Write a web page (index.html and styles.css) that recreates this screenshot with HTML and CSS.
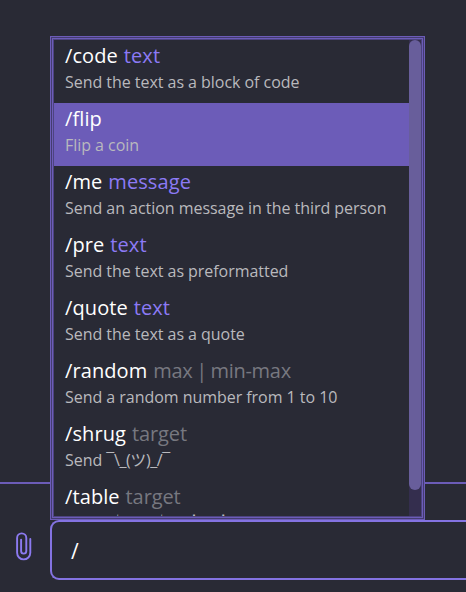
FILE: index.html
```
<!DOCTYPE html>
<html lang="en">
<head>
<meta charset="utf-8">
<title>Chat</title>
<link rel="stylesheet" href="styles.css">
</head>
<body>
<div class="chat">
	<div class="messages"></div>
	<div class="composer">
		<button class="attach" aria-label="Attach a file">
			<svg width="18" height="30" viewBox="0 0 18 30" fill="none" stroke="currentColor" stroke-width="1.9" stroke-linecap="round">
				<path d="M15.3 7v13.8a6.6 6.6 0 0 1-13.2 0V6a4.6 4.6 0 0 1 9.2 0v13a2.6 2.6 0 0 1-5.2 0V7.6"/>
			</svg>
		</button>
		<div class="input">/</div>
	</div>
	<div class="commands">
		<ul class="list">
			<li><div class="name">/code <span class="arg">text</span></div><div class="desc">Send the text as a block of code</div></li>
			<li class="selected"><div class="name">/flip</div><div class="desc">Flip a coin</div></li>
			<li><div class="name">/me <span class="arg">message</span></div><div class="desc">Send an action message in the third person</div></li>
			<li><div class="name">/pre <span class="arg">text</span></div><div class="desc">Send the text as preformatted</div></li>
			<li><div class="name">/quote <span class="arg">text</span></div><div class="desc">Send the text as a quote</div></li>
			<li><div class="name">/random <span class="optional range">max | min-max</span></div><div class="desc">Send a random number from 1 to 10</div></li>
			<li><div class="name">/shrug <span class="optional">target</span></div><div class="desc">Send <span class="shrug">¯\_(ツ)_/¯</span></div></li>
			<li><div class="name">/table <span class="optional">target</span></div><div class="desc">Send <span class="flipped">(╯°□°)╯︵ ┻━┻</span></div></li>
		</ul>
		<div class="scrollbar"><div class="thumb"></div></div>
	</div>
</div>
</body>
</html>
```

FILE: styles.css
```
* {
	box-sizing: border-box;
}
body {
	margin: 0;
	background: #292a35;
	color: #fff;
	font-family: "Open Sans", "Noto Sans", "Noto Sans CJK JP", sans-serif;
	overflow: hidden;
}
.chat {
	position: relative;
	display: flex;
	flex-direction: column;
	height: 592px;
}
.messages {
	flex: 1;
}
.composer {
	display: flex;
	height: 110px;
	padding: 36px 0 12px;
	border-top: 2px solid #6c5cb8;
}
.attach {
	width: 50px;
	padding: 0 0 6px 15px;
	border: 0;
	background: none;
	color: #8c7af0;
	display: flex;
	align-items: center;
}
.input {
	flex: 1;
	border: 2px solid #8473e2;
	border-right: 0;
	border-radius: 9px 0 0 9px;
	padding-left: 19px;
	font-size: 21px;
	line-height: 58px;
}

/* popup lies over the messages and the composer's top line */
.commands {
	position: absolute;
	left: 50px;
	top: 36px;
	width: 375px;
	height: 484px;
	display: flex;
	padding: 3px;
	border: 1px solid #6c5cb8;
	box-shadow: inset 0 0 0 1px #443c71, inset 0 0 0 2px #6c5cb8, inset 0 0 0 3px #4d447f;
	background: #292a35;
}
.list {
	flex: 1;
	margin: 0;
	padding: 0;
	list-style: none;
	white-space: nowrap;
	overflow: hidden;
}
.list li {
	height: 63px;
	padding: 1px 11px 0;
}
.list .selected {
	background: #6c5cb8;
}
.name {
	font-size: 20px;
	line-height: 30px;
	letter-spacing: 0.1px;
	word-spacing: 0.6px;
}
.arg {
	color: #8c7af5;
}
.optional {
	color: #777880;
	letter-spacing: -0.1px;
}
.range {
	letter-spacing: -0.3px;
	word-spacing: -1.2px;
}
.desc {
	font-size: 16px;
	line-height: 22px;
	letter-spacing: -0.04px;
	color: #b9b9bd;
}
.shrug {
	letter-spacing: -0.4px;
}
.flipped {
	letter-spacing: -1.3px;
}
.scrollbar {
	width: 12px;
	background: #342e4e;
}
.thumb {
	height: 450px;
	border-radius: 6px;
	background: #685e9b;
}
```
